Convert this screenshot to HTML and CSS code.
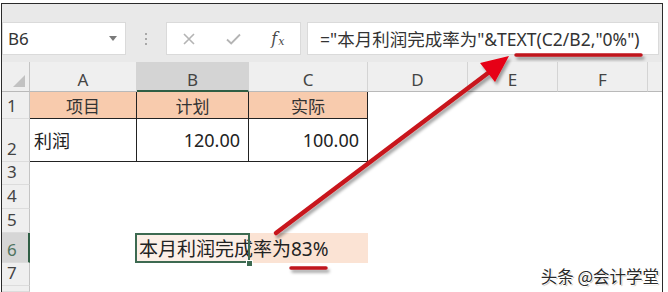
FILE: index.html
```html
<!DOCTYPE html>
<html lang="zh">
<head>
<meta charset="utf-8">
<title>Excel</title>
<link rel="stylesheet" href="styles.css">
</head>
<body>
<div class="frame">
  <div class="toolbar">
    <div class="namebox"><span class="ref">B6</span><span class="caret"></span></div>
    <div class="grip"><i></i><i></i><i></i></div>
    <div class="fxbox">
      <span class="slot"><svg width="12" height="12" viewBox="0 0 12 12"><path d="M1 1L11 11M11 1L1 11" stroke="#b4b4b4" stroke-width="1.6" fill="none"/></svg></span>
      <span class="slot"><svg width="15" height="12" viewBox="0 0 15 12"><path d="M1 6.5L5.2 10.5L14 1.5" stroke="#b4b4b4" stroke-width="1.8" fill="none"/></svg></span>
      <span class="slot fx"><i>f</i><span class="fxx">x</span></span>
    </div>
    <div class="formula">="本月利润完成率为"&amp;TEXT(C2/B2,"0%")</div>
  </div>
  <div class="sheet">
    <div class="corner"><span class="tri"></span></div>
    <div class="ch">A</div><div class="ch sel">B</div><div class="ch">C</div><div class="ch">D</div><div class="ch">E</div><div class="ch">F</div><div class="ch last"></div>

    <div class="rh">1</div>
    <div class="c hd">项目</div><div class="c hd">计划</div><div class="c hd">实际</div>
    <div></div><div></div><div></div><div></div>

    <div class="rh">2</div>
    <div class="c tb">利润</div><div class="c tb num">120.00</div><div class="c tb num">100.00</div>
    <div></div><div></div><div></div><div></div>

    <div class="rh">3</div>
    <div></div><div></div><div></div><div></div><div></div><div></div><div></div>

    <div class="rh">4</div>
    <div></div><div></div><div></div><div></div><div></div><div></div><div></div>

    <div class="rh">5</div>
    <div></div><div></div><div></div><div></div><div></div><div></div><div></div>

    <div class="rh sel">6</div>
    <div></div>
    <div class="c active">本月利润完成率为83%<span class="handle"></span></div>
    <div class="peach"></div>
    <div></div><div></div><div></div><div></div>

    <div class="rh">7</div>
    <div></div><div></div><div></div><div></div><div></div><div></div><div></div>

    <div class="rh"></div>
    <div></div><div></div><div></div><div></div><div></div><div></div><div></div>
  </div>
  <div class="watermark">头条 @会计学堂</div>
</div>
<svg class="annot" width="668" height="292" viewBox="0 0 668 292">
  <defs>
    <filter id="sh" x="-20%" y="-20%" width="140%" height="140%">
      <feDropShadow dx="2" dy="3" stdDeviation="1.5" flood-color="#000" flood-opacity="0.35"/>
    </filter>
  </defs>
  <g filter="url(#sh)">
    <line x1="276" y1="233" x2="492" y2="70" stroke="#c8141c" stroke-width="4.5" stroke-linecap="round"/>
    <polygon points="509,56 480,63 495,82" fill="#e60012"/>
    <line x1="516" y1="55" x2="641" y2="55" stroke="#c0141c" stroke-width="3.5" stroke-linecap="round"/>
    <line x1="291" y1="268" x2="326" y2="268" stroke="#c0141c" stroke-width="3.5" stroke-linecap="round"/>
  </g>
</svg>
</body>
</html>
```

FILE: styles.css
```css
* { box-sizing: border-box; }

body {
  margin: 0;
  background: #fff;
  overflow: hidden;
  font-family: "Noto Sans", "Noto Sans CJK SC", sans-serif;
  color: #222;
}

.frame {
  margin: 3px 0 0 1px;
  width: 662px;
  height: 289px;
  border: 1px solid #2b2b2b;
  border-bottom: none;
  position: relative;
  display: flex;
  flex-direction: column;
  overflow: hidden;
}

/* formula bar */
.toolbar {
  height: 58px;
  flex: none;
  background: #e9e9e9;
  display: flex;
  align-items: flex-start;
  padding-top: 18px;
}

.namebox {
  width: 124px;
  height: 33px;
  background: #fff;
  border: 1px solid #dadada;
  display: flex;
  align-items: center;
  justify-content: space-between;
  padding: 0 8px 0 5px;
}

.ref {
  font-size: 17px;
  color: #333;
}

.caret {
  width: 0;
  height: 0;
  border-left: 4px solid transparent;
  border-right: 4px solid transparent;
  border-top: 5px solid #7a7a7a;
}

.grip {
  width: 40px;
  height: 33px;
  display: flex;
  flex-direction: column;
  align-items: center;
  justify-content: center;
  gap: 3px;
}

.grip i {
  width: 2px;
  height: 2px;
  background: #a8a8a8;
}

.fxbox {
  width: 135px;
  height: 33px;
  background: #fff;
  border: 1px solid #dadada;
  display: flex;
}

.slot {
  width: 45px;
  display: flex;
  align-items: center;
  justify-content: center;
}

.fx {
  font-family: "DejaVu Serif", "Liberation Serif", serif;
  color: #4a4a4a;
  font-size: 16px;
}

.fx i {
  font-style: italic;
}

.fxx {
  font-size: 11px;
  font-style: italic;
  margin-top: 5px;
  margin-left: 1px;
}

.formula {
  flex: 1;
  height: 33px;
  margin-left: 6px;
  margin-right: 3px;
  background: #fff;
  border: 1px solid #dadada;
  padding-left: 12px;
  display: flex;
  align-items: center;
  font-size: 17.5px;
  color: #333;
  white-space: nowrap;
}

/* sheet */
.sheet {
  flex: 1;
  display: grid;
  grid-template-columns: 28px 107px 112px 119px 100px 90px 90px 1fr;
  grid-template-rows: 30px 27px 43px 23px 24px 24px 30px 23px 1fr;
}

.corner {
  background: #efefef;
  border-right: 1px solid #c4c4c4;
  border-bottom: 1px solid #b9b9b9;
  position: relative;
}

.tri {
  position: absolute;
  right: 4px;
  bottom: 4px;
  width: 0;
  height: 0;
  border-left: 12px solid transparent;
  border-bottom: 12px solid #c2c2c2;
}

.ch {
  background: #efefef;
  border-right: 1px solid #d4d4d4;
  border-bottom: 1px solid #b9b9b9;
  display: flex;
  align-items: flex-end;
  justify-content: center;
  padding-bottom: 1px;
  font-size: 17px;
  line-height: 20px;
  color: #444;
}

.ch.sel {
  background: #d4d4d4;
  border-bottom: 2px solid #2f5e44;
  padding-bottom: 0;
}

.ch.last {
  border-right: none;
}

.rh {
  background: #efefef;
  border-right: 1px solid #c4c4c4;
  border-bottom: 1px solid #dcdcdc;
  display: flex;
  align-items: flex-end;
  padding: 0 0 1px 5px;
  font-size: 17px;
  line-height: 22px;
  color: #444;
}

.rh.sel {
  background: #d6d6d6;
  border-right: 2px solid #2f5e44;
  color: #4f7360;
}

.c {
  display: flex;
  align-items: center;
  padding: 0 4px;
  white-space: nowrap;
  font-size: 18px;
  color: #222;
}

.hd {
  background: #f8cbad;
  justify-content: center;
  font-size: 17px;
  border-right: 1px solid #222;
  border-bottom: 1px solid #222;
  color: #333;
}

.tb {
  border-right: 1px solid #222;
  border-bottom: 1px solid #222;
}

.num {
  justify-content: flex-end;
  padding-right: 8px;
}

.active {
  position: relative;
  z-index: 1;
  background: #fcefe7;
  font-size: 19px;
  padding-left: 2px;
  overflow: visible;
}

.active::after {
  content: "";
  position: absolute;
  left: -2px;
  top: 0;
  right: -1px;
  bottom: 0;
  border: 2px solid #3d6a51;
}

.handle {
  position: absolute;
  right: -4px;
  bottom: -4px;
  width: 7px;
  height: 7px;
  background: #3d6a51;
  border: 1px solid #fff;
  z-index: 2;
}

.peach {
  background: #fbe3d4;
}

.watermark {
  position: absolute;
  right: 3px;
  top: 260px;
  font-family: "Noto Sans CJK SC", sans-serif;
  font-size: 16.5px;
  line-height: 24px;
  color: #2a2a2a;
  text-shadow: 1px 0 0 #fff, -1px 0 0 #fff, 0 1px 0 #fff, 0 -1px 0 #fff, 1px 1px 1px #999;
}

.annot {
  position: absolute;
  left: 0;
  top: 0;
  pointer-events: none;
}
```
